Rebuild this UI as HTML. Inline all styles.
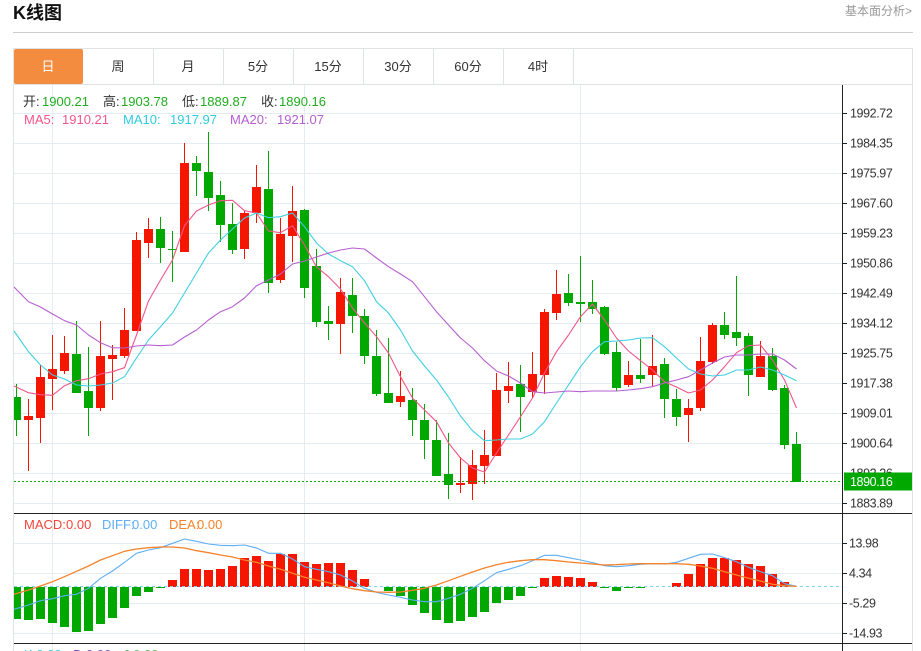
<!DOCTYPE html>
<html lang="zh"><head><meta charset="utf-8"><title>K线图</title>
<style>
html,body{margin:0;padding:0;background:#fff;width:921px;height:651px;overflow:hidden}
svg{display:block;font-family:"Liberation Sans","Noto Sans CJK SC",sans-serif}
.a text{font-size:12.5px;fill:#333;letter-spacing:-.4px}
.i text{font-size:13px}
.t text{font-size:13px;fill:#333;text-anchor:middle}
</style></head><body>
<svg width="921" height="651" viewBox="0 0 921 651" xmlns="http://www.w3.org/2000/svg">
<text x="13" y="19" font-size="18" font-weight="700" fill="#111">K线图</text>
<text x="845" y="15" font-size="12" fill="#999">基本面分析&gt;</text>
<g shape-rendering="crispEdges" fill="none">
<path d="M13 32.5H913" stroke="#ccc"/>
<path d="M13.5 48.5H912.5V651M13.5 48.5V651M13.5 84.5H912.5" stroke="#e0e3e6"/>
<path d="M153.5 49V84M223.5 49V84M293.5 49V84M363.5 49V84M433.5 49V84M503.5 49V84M573.5 49V84" stroke="#e0e3e6"/>
<path d="M14 113.5H842M14 143.5H842M14 173.5H842M14 203.5H842M14 233.5H842M14 263.5H842M14 293.5H842M14 323.5H842M14 353.5H842M14 383.5H842M14 413.5H842M14 443.5H842M14 473.5H842M14 503.5H842M14 543.5H842M14 573.5H842M14 603.5H842M14 633.5H842M52.5 85V651M304.5 85V651M580.5 85V651" stroke="#e4ebf1"/>
</g>
<rect x="14" y="49" width="69" height="35" rx="2" fill="#f48c40"/>
<g class="t">
<text x="48" y="71" style="fill:#fff">日</text><text x="118" y="71">周</text><text x="188" y="71">月</text><text x="258" y="71">5分</text><text x="328" y="71">15分</text><text x="398" y="71">30分</text><text x="468" y="71">60分</text><text x="538" y="71">4时</text>
</g>
<g shape-rendering="crispEdges">
<path fill="none" stroke="#00a800" d="M16.5 384V436M76.5 321V393M88.5 347V436M160.5 217V263M172.5 231V282M196.5 156V196M208.5 132V211M220.5 181V242M232.5 203V254M268.5 151V293M304.5 209V298M316.5 249V327M328.5 306V340M352.5 278V333M364.5 309V364M376.5 330V396M388.5 338V403M412.5 388V436M424.5 404V459M436.5 420V476M448.5 433V499M520.5 365V432M568.5 274V306M580.5 256V322M592.5 280V314M604.5 306V355M616.5 342V391M640.5 339V383M664.5 358V418M676.5 389V426M724.5 312V339M736.5 276V346M748.5 333V396M772.5 348V391M784.5 385V449M796.5 432V482"/>
<path fill="#00a800" d="M14 397h7V420h-7zM72 354h9V393h-9zM84 391h9V408h-9zM156 229h9V248h-9zM168 249h9V250h-9zM192 163h9V171h-9zM204 172h9V198h-9zM216 195h9V225h-9zM228 224h9V250h-9zM264 189h9V283h-9zM300 210h9V288h-9zM312 266h9V322h-9zM324 321h9V324h-9zM348 295h9V316h-9zM360 316h9V356h-9zM372 356h9V394h-9zM384 393h9V403h-9zM408 400h9V420h-9zM420 420h9V440h-9zM432 440h9V476h-9zM444 474h9V485h-9zM516 384h9V397h-9zM564 293h9V303h-9zM576 302h9V304h-9zM588 302h9V309h-9zM600 307h9V354h-9zM612 352h9V388h-9zM636 375h9V379h-9zM660 364h9V399h-9zM672 399h9V417h-9zM720 325h9V335h-9zM732 332h9V338h-9zM744 336h9V375h-9zM768 356h9V390h-9zM780 388h9V445h-9zM792 444h9V482h-9z"/>
<path fill="none" stroke="#f51600" d="M28.5 399V471M40.5 365V443M52.5 335V410M64.5 336V374M100.5 321V411M112.5 345V400M124.5 308V358M136.5 232V331M148.5 218V258M184.5 143V252M244.5 211V259M256.5 165V223M280.5 218V283M292.5 186V262M340.5 278V354M400.5 371V407M460.5 457V493M472.5 450V500M484.5 430V484M496.5 373V456M508.5 362V403M532.5 352V398M544.5 309V394M556.5 270V320M628.5 361V387M652.5 335V386M688.5 399V442M700.5 337V411M712.5 323V364M760.5 341V377"/>
<path fill="#f51600" d="M24 416h9V420h-9zM36 377h9V418h-9zM48 369h9V379h-9zM60 353h9V371h-9zM96 356h9V408h-9zM108 355h9V359h-9zM120 330h9V356h-9zM132 240h9V331h-9zM144 229h9V243h-9zM180 163h9V252h-9zM240 213h9V249h-9zM252 187h9V213h-9zM276 234h9V280h-9zM288 211h9V236h-9zM336 292h9V324h-9zM396 396h9V402h-9zM456 483h9V485h-9zM468 465h9V484h-9zM480 455h9V466h-9zM492 390h9V456h-9zM504 386h9V391h-9zM528 374h9V392h-9zM540 312h9V375h-9zM552 294h9V313h-9zM624 375h9V385h-9zM648 366h9V375h-9zM684 408h9V415h-9zM696 361h9V408h-9zM708 325h9V362h-9zM756 356h9V377h-9z"/>
</g>
<g fill="none" stroke-width="1.1" stroke-linejoin="round">
<path stroke="#f0558a" d="M14 386L28.500 392.700L40.500 394.700L52.500 395.300L64.500 385.700L76.500 380.700L88.500 378.700L100.500 374L112.500 371.700L124.500 367.700L136.500 335L148.500 301L160.500 280L172.500 260L184.500 225.700L196.500 211L208.500 205L220.500 200.700L232.500 200.300L244.500 210.700L256.500 213L268.500 231L280.500 232.700L292.500 225.700L304.500 245L316.500 267L328.500 276.700L340.500 289L352.500 308L364.500 323L376.500 336.700L388.500 353L400.500 376.700L412.500 398L424.500 410L436.500 421.700L448.500 443L460.500 458L472.500 468L484.500 472L496.500 453L508.500 435L520.500 416.700L532.500 398L544.500 373L556.500 351.700L568.500 335L580.500 316.700L592.500 304L604.500 320L616.500 338L628.500 351L640.500 360.700L652.500 370L664.500 381.700L676.500 387L688.500 393L700.500 390L712.500 380L724.500 366.700L736.500 352.700L748.500 345.700L760.500 345L772.500 360L784.500 380L796.500 408"/>
<path stroke="#3fcfe3" d="M14 331L28.500 351.700L40.500 365L52.500 375L64.500 379L76.500 385L88.500 386L100.500 385L112.500 383L124.500 376.700L136.500 358L148.500 340L160.500 326.700L172.500 313L184.500 293L196.500 273L208.500 253L220.500 240L232.500 229L244.500 218L256.500 213L268.500 217.700L280.500 216.700L292.500 213L304.500 226.700L316.500 243L328.500 254L340.500 260.700L352.500 266.700L364.500 280.700L376.500 301.700L388.500 313L400.500 330L412.500 351L424.500 366L436.500 380L448.500 397L460.500 416L472.500 430.700L484.500 440.700L496.500 440L508.500 439L520.500 439L532.500 434L544.500 421.700L556.500 403L568.500 385L580.500 366.700L592.500 351.700L604.500 341.700L616.500 341L628.500 340L640.500 338L652.500 337.700L664.500 346.700L676.500 358L688.500 369L700.500 374L712.500 376L724.500 375L736.500 370L748.500 370L760.500 367L772.500 370L784.500 375L796.500 380.700"/>
<path stroke="#b65fd0" d="M14 287L28.500 301.700L40.500 307L52.500 314L64.500 320.700L76.500 325L88.500 335L100.500 342.700L112.500 347.700L124.500 348L136.500 346L148.500 345L160.500 345.700L172.500 345L184.500 337L196.500 330L208.500 320L220.500 311.700L232.500 306.700L244.500 298L256.500 285.700L268.500 280L280.500 274L292.500 264L304.500 261L316.500 257L328.500 253L340.500 250L352.500 248L364.500 249L376.500 258L388.500 266.700L400.500 274L412.500 281.700L424.500 296.700L436.500 311.700L448.500 325L460.500 338L472.500 348L484.500 360.700L496.500 371L508.500 376L520.500 383L532.500 391.700L544.500 393L556.500 392L568.500 391L580.500 391.700L592.500 391L604.500 391L616.500 391L628.500 390L640.500 388.700L652.500 386.700L664.500 383L676.500 380L688.500 376.700L700.500 370L712.500 363L724.500 357L736.500 355L748.500 355L760.500 354L772.500 354L784.500 360L796.500 369"/>
</g>
<path d="M14 481.500H842" stroke="#00a800" stroke-dasharray="2 2" shape-rendering="crispEdges"/>
<g shape-rendering="crispEdges">
<path fill="#00a800" d="M14 587h7V619h-7zM24 587h9V620h-9zM36 587h9V619h-9zM48 587h9V623h-9zM60 587h9V627h-9zM72 587h9V632h-9zM84 587h9V631h-9zM96 587h9V624h-9zM108 587h9V618h-9zM120 587h9V608h-9zM132 587h9V596h-9zM144 587h9V592h-9zM156 587h9V588h-9zM384 587h9V591h-9zM396 587h9V596h-9zM408 587h9V605h-9zM420 587h9V613h-9zM432 587h9V620h-9zM444 587h9V623h-9zM456 587h9V621h-9zM468 587h9V617h-9zM480 587h9V612h-9zM492 587h9V603h-9zM504 587h9V600h-9zM516 587h9V596h-9zM528 587h9V588h-9zM600 587h9V588h-9zM612 587h9V591h-9zM624 587h9V588h-9zM636 587h9V588h-9z"/>
<path fill="#f51600" d="M168 580h9V587h-9zM180 569h9V587h-9zM192 569h9V587h-9zM204 570h9V587h-9zM216 569h9V587h-9zM228 566h9V587h-9zM240 558h9V587h-9zM252 556h9V587h-9zM264 561h9V587h-9zM276 554h9V587h-9zM288 554h9V587h-9zM300 562h9V587h-9zM312 564h9V587h-9zM324 563h9V587h-9zM336 563h9V587h-9zM348 570h9V587h-9zM360 579h9V587h-9zM540 578h9V587h-9zM552 576h9V587h-9zM564 577h9V587h-9zM576 578h9V587h-9zM588 582h9V587h-9zM672 583h9V587h-9zM684 574h9V587h-9zM696 564h9V587h-9zM708 558h9V587h-9zM720 558h9V587h-9zM732 560h9V587h-9zM744 564h9V587h-9zM756 566h9V587h-9zM768 574h9V587h-9zM780 582h9V587h-9z"/>
</g>
<path d="M14 586.500H842" stroke="#7fd4ee" stroke-dasharray="3 3" shape-rendering="crispEdges"/>
<g fill="none" stroke-width="1.1" stroke-linejoin="round">
<path stroke="#5eaef5" d="M14 609.300L28.500 605L40.500 600.700L52.500 598.700L64.500 595.700L76.500 594.300L88.500 588.300L100.500 578.300L112.500 571L124.500 562.300L136.500 553.300L148.500 550L160.500 547.700L172.500 543.300L184.500 539L196.500 541.300L208.500 544L220.500 545.300L232.500 545.700L244.500 545L256.500 548L268.500 553.300L280.500 553.300L292.500 559L304.500 566.700L316.500 569.300L328.500 571.700L340.500 575L352.500 581L364.500 588.300L376.500 592.300L388.500 595L400.500 597.300L412.500 600L424.500 601.700L436.500 601.700L448.500 598.300L460.500 594.300L472.500 588.300L484.500 580.700L496.500 572.700L508.500 569.300L520.500 565.700L532.500 560.700L544.500 555.300L556.500 555.300L568.500 557.700L580.500 560L592.500 562.700L604.500 565.700L616.500 566.700L628.500 565.700L640.500 564.300L652.500 563.700L664.500 564L676.500 562.300L688.500 558.300L700.500 554.300L712.500 554L724.500 557.700L736.500 561.700L748.500 567.300L760.500 571.700L772.500 575.700L784.500 583.700L796.500 586.300"/>
<path stroke="#f5822a" stroke-width="1.3" d="M14 594.300L28.500 590L40.500 586L52.500 581.700L64.500 576.700L76.500 571.300L88.500 566L100.500 560L112.500 555.700L124.500 551.300L136.500 549L148.500 547.700L160.500 547L172.500 547L184.500 548L196.500 550.700L208.500 552.700L220.500 555L232.500 557L244.500 560L256.500 562.300L268.500 566L280.500 569.300L292.500 573.300L304.500 577.300L316.500 580L328.500 582.700L340.500 586L352.500 588.700L364.500 590.700L376.500 592L388.500 592.300L400.500 592L412.500 590.300L424.500 588.300L436.500 585L448.500 580.700L460.500 576.300L472.500 572L484.500 568L496.500 564.700L508.500 562.300L520.500 560.700L532.500 559.700L544.500 559.700L556.500 560.700L568.500 562L580.500 563L592.500 564L604.500 565L616.500 564.700L628.500 564L640.500 563.700L652.500 563.700L664.500 563.700L676.500 563.700L688.500 564.300L700.500 566L712.500 568.300L724.500 571.700L736.500 575L748.500 578.300L760.500 581L772.500 584.300L784.500 585.700L796.500 586.300"/>
</g>
<g class="a">
<text x="850" y="117.500">1992.72</text><text x="850" y="147.500">1984.35</text><text x="850" y="177.500">1975.97</text><text x="850" y="207.500">1967.60</text><text x="850" y="237.500">1959.23</text><text x="850" y="267.500">1950.86</text><text x="850" y="297.500">1942.49</text><text x="850" y="327.500">1934.12</text><text x="850" y="357.500">1925.75</text><text x="850" y="387.500">1917.38</text><text x="850" y="417.500">1909.01</text><text x="850" y="447.500">1900.64</text><text x="850" y="477.500">1892.26</text><text x="850" y="507.500">1883.89</text>
<text x="849" y="547.500">13.98</text><text x="849" y="577.500">4.34</text><text x="849" y="607.500">-5.29</text><text x="849" y="637.500">-14.93</text>
</g>
<rect x="844" y="472.500" width="68" height="18" fill="#00a800"/>
<text x="850" y="486" font-size="12.5" fill="#fff" letter-spacing="-.4">1890.16</text>
<g shape-rendering="crispEdges" fill="none" stroke="#222">
<path d="M842.500 85V651M14 513.500H912M14 643.500H912"/>
<path d="M842 113.500h5M842 143.500h5M842 173.500h5M842 203.500h5M842 233.500h5M842 263.500h5M842 293.500h5M842 323.500h5M842 353.500h5M842 383.500h5M842 413.500h5M842 443.500h5M842 503.500h5M842 543.500h5M842 573.500h5M842 603.500h5M842 633.500h5"/>
</g>
<g class="i">
<text x="23" y="106" fill="#333">开:</text><text x="42" y="106" fill="#1fad1f">1900.21</text>
<text x="103" y="106" fill="#333">高:</text><text x="121" y="106" fill="#1fad1f">1903.78</text>
<text x="182" y="106" fill="#333">低:</text><text x="200" y="106" fill="#1fad1f">1889.87</text>
<text x="261" y="106" fill="#333">收:</text><text x="279" y="106" fill="#1fad1f">1890.16</text>
<text x="24" y="124" fill="#f0558a">MA5:</text><text x="62" y="124" fill="#f0558a">1910.21</text>
<text x="123" y="124" fill="#2fcbe0">MA10:</text><text x="170" y="124" fill="#2fcbe0">1917.97</text>
<text x="230" y="124" fill="#b65fd0">MA20:</text><text x="277" y="124" fill="#b65fd0">1921.07</text>
<text x="24" y="529" fill="#f0453a">MACD:</text><text x="66" y="529" fill="#f0453a">0.00</text>
<text x="102" y="529" fill="#5eaef5">DIFF:</text><text x="132" y="529" fill="#5eaef5">0.00</text>
<text x="169" y="529" fill="#f5822a">DEA:</text><text x="197" y="529" fill="#f5822a">0.00</text>
<text x="24" y="659" fill="#2fcbe0">K:0.00</text><text x="73" y="659" fill="#7d4fd0">D:0.00</text><text x="123" y="659" fill="#5cc46a">J:0.00</text>
</g>
</svg>
</body></html>
